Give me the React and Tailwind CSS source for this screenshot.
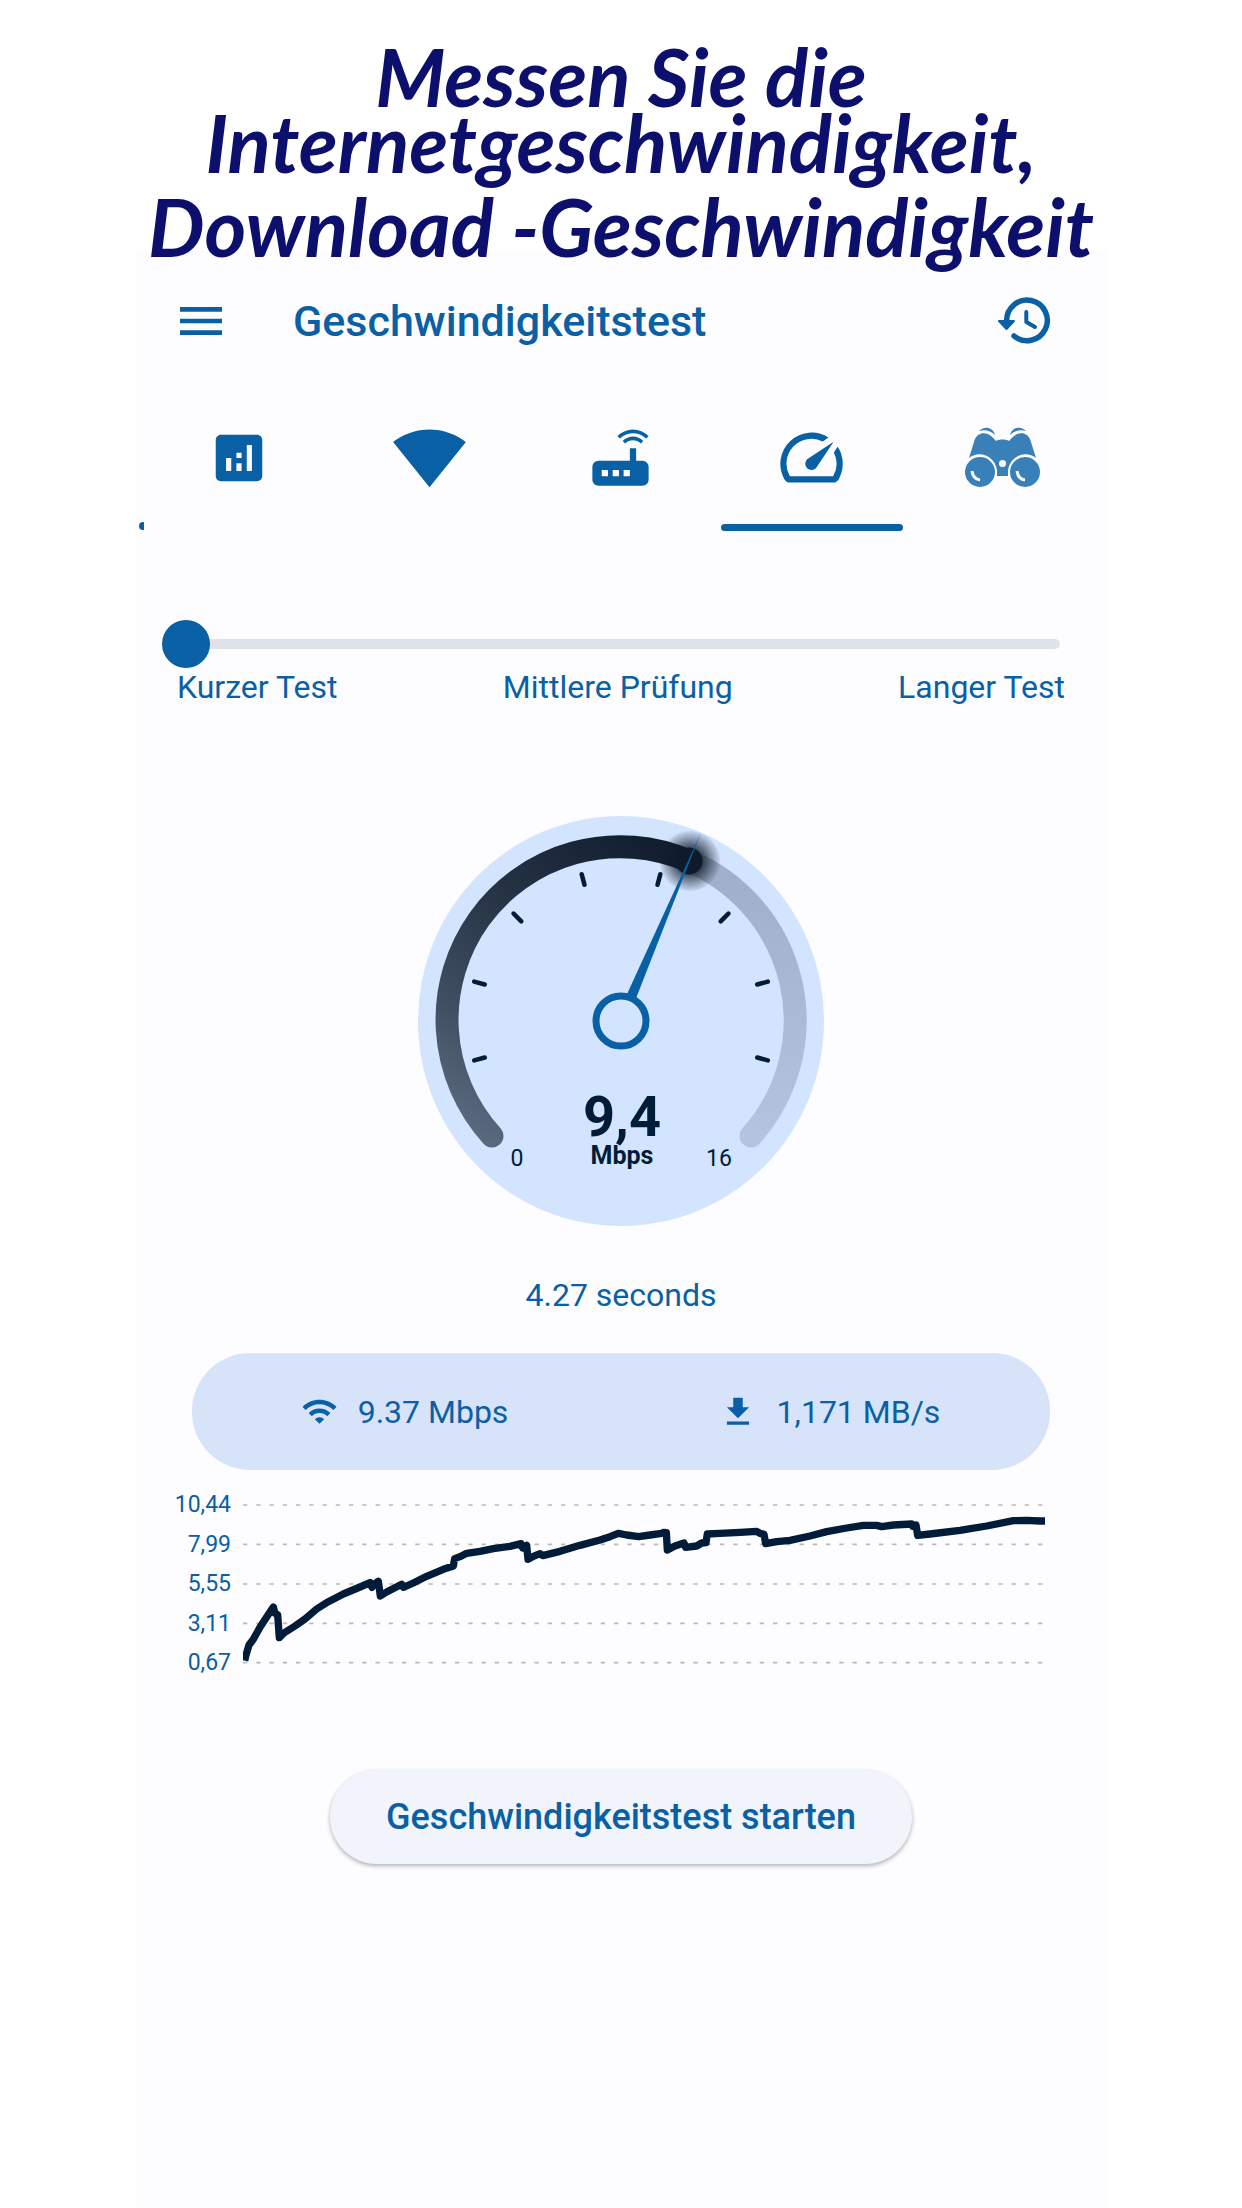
import { MdAnalytics, MdSignalWifi4Bar, MdRouter, MdSpeed, MdWifi, MdDownload, MdMenu } from "react-icons/md";

const TICKS = [-105, -75, -45, -15, 15, 45, 75, 105];

const LINE =
  "254,572 258,555 267,525 280,508 300,472 322,438 340,411 345,430 353,434 358,503 372,489 405,468 435,447 470,417 505,395 550,372 600,351 630,338 636,352 642,343 655,334 661,378 680,366 725,343 730,352 760,339 800,319 850,298 880,288 884,266 900,260 920,250 960,244 1000,236 1050,229 1083,221 1088,234 1100,226 1104,268 1120,259 1140,251 1148,257 1200,244 1260,226 1320,210 1350,200 1375,190 1400,195 1436,200 1470,195 1505,190 1510,187 1519,188 1522,240 1545,228 1572,219 1577,232 1610,228 1625,219 1638,218 1642,192 1680,190 1740,187 1790,184 1800,190 1812,193 1817,221 1850,215 1890,211 1950,198 2000,185 2060,174 2110,166 2150,166 2165,170 2200,165 2255,162 2258,169 2268,165 2273,196 2310,192 2400,181 2480,168 2560,152 2600,151 2640,153 2655,153";

function HistoryIcon() {
  return (
    <svg viewBox="0 0 54 50" className="h-[50px] w-[54px]" fill="none" stroke="currentColor" strokeLinecap="round" strokeLinejoin="round" aria-hidden="true">
      <path d="M8.7 25A20.3 20.3 0 1 1 16 40" strokeWidth="5.5" />
      <path d="M1 25H16L8.5 33Z" fill="currentColor" strokeWidth="2" />
      <path d="M28.3 16V26L37 31" strokeWidth="4" />
    </svg>
  );
}

function BinocularsIcon() {
  return (
    <svg viewBox="0 0 75 61" className="h-[61px] w-[75px]" fill="#3a80b8" aria-hidden="true">
      <path d="M14 4C18-1 28-1 30 8C26 4 20 2 14 4Z" />
      <path d="M61 4C57-1 47-1 45 8C49 4 55 2 61 4Z" />
      <path d="M4 31L9 15C11 7 17 5 23 7C27 9 29 12 31 14C34 12 41 12 44 14C46 12 48 9 52 7C58 5 64 7 66 15L71 31C65 26 56 26 50 31C46 34 44 38 43 43V49H32V43C31 38 29 34 25 31C19 26 10 26 4 31Z" />
      <circle cx="15" cy="45" r="15" />
      <circle cx="60" cy="45" r="15" />
      <circle cx="37.5" cy="36.500" r="3.500" fill="#fdfcff" />
      <path d="M7 44Q8 52 15 53M52 44Q53 52 60 53" fill="none" stroke="#fdfcff" strokeWidth="3" />
    </svg>
  );
}

function Gauge() {
  return (
    <svg viewBox="0 0 406 410" className="h-[410px] w-[406px]" role="img" aria-label="9,4 Mbps">
      <defs>
        <linearGradient id="done" gradientUnits="userSpaceOnUse" x1="60" y1="325" x2="272" y2="25">
          <stop offset="0" stopColor="#5b6b7f" />
          <stop offset="0.25" stopColor="#414f62" />
          <stop offset="0.57" stopColor="#263446" />
          <stop offset="1" stopColor="#0f1b2b" />
        </linearGradient>
        <linearGradient id="rest" x1="0" y1="0" x2="0" y2="1">
          <stop offset="0" stopColor="#9fafca" />
          <stop offset="1" stopColor="#b3c4df" />
        </linearGradient>
        <radialGradient id="glow">
          <stop offset="0.35" stopColor="#0f1b2b" stopOpacity="0.85" />
          <stop offset="1" stopColor="#0f1b2b" stopOpacity="0.06" />
        </radialGradient>
      </defs>
      <ellipse cx="203" cy="205" rx="203" ry="205" fill="#d3e4ff" />
      <g fill="none" strokeWidth="23" strokeLinecap="round">
        <path d="M271 45A173 173 0 0 1 333 320" stroke="url(#rest)" />
        <path d="M74 320A173 173 0 0 1 271 45" stroke="url(#done)" />
      </g>
      {TICKS.map((a) => (
        <path key={a} d="M203 53V64" transform={`rotate(${a} 203 205)`} stroke="#001c38" strokeWidth="4.5" strokeLinecap="round" />
      ))}
      <circle cx="272" cy="45" r="30" fill="url(#glow)" />
      <circle cx="271" cy="45" r="13.5" fill="#0f1b2b" />
      <path d="M203 1L208 180H198Z" transform="rotate(23 203 205)" fill="#0960a5" />
      <circle cx="203" cy="205" r="25" fill="#d3e4ff" stroke="#0960a5" strokeWidth="7" />
      <g fill="#001c38" textAnchor="middle">
        <text x="204" y="320" fontSize="56" fontWeight="700">9,4</text>
        <text x="204" y="348" fontSize="25" fontWeight="700">Mbps</text>
        <text x="99" y="350" fontSize="23">0</text>
        <text x="301" y="350" fontSize="23">16</text>
      </g>
    </svg>
  );
}

function Chart() {
  return (
    <div className="mt-[19px] flex pr-[62px] pl-8">
      <div className="flex w-16 flex-col justify-between text-right text-[23px] leading-8">
        {["10,44", "7,99", "5,55", "3,11", "0,67"].map((v) => (
          <span key={v}>{v}</span>
        ))}
      </div>
      <svg viewBox="249 57 2406 570" className="ml-3 min-w-0 flex-1" role="img" aria-label="Verlauf der Geschwindigkeit">
        {[105, 223, 342, 460, 578].map((y) => (
          <path key={y} d={`M249 ${y}H2655`} stroke="#b9b9b9" strokeWidth="5" strokeDasharray="13 26.75" />
        ))}
        <polyline points={LINE} fill="none" stroke="#001c38" strokeWidth="22" strokeLinejoin="round" />
      </svg>
    </div>
  );
}

const TABS = [
  { label: "Analyse", icon: <MdAnalytics size={62} /> },
  { label: "WLAN", icon: <MdSignalWifi4Bar size={75} /> },
  { label: "Router", icon: <MdRouter size={75} /> },
  { label: "Geschwindigkeit", icon: <MdSpeed size={75} />, active: true },
  { label: "Suche", icon: <BinocularsIcon /> },
];

export default function App() {
  return (
    <div className="min-h-screen bg-white font-['Roboto',sans-serif] text-[#0960a5]">
      <h1 className="relative z-10 pt-[43px] text-center font-['Lato',sans-serif] text-[80px] leading-[66px] font-bold text-[#0c106c] italic">
        Messen Sie die
        <br />
        Internetgeschwindigkeit,
        <span className="block leading-[102px]">Download -Geschwindigkeit</span>
      </h1>
      <main className="mx-auto -mt-[26px] flex min-h-[1957px] max-w-[972px] flex-col bg-[#fdfcff]">
        <header className="flex items-center px-[34px] pt-[38px]">
          <button aria-label="Menü" className="ml-1">
            <MdMenu size={56} />
          </button>
          <h2 className="ml-16 flex-1 text-[43px] leading-[64px] font-medium">Geschwindigkeitstest</h2>
          <button aria-label="Verlauf" className="mr-[21px]">
            <HistoryIcon />
          </button>
        </header>
        <nav className="relative mt-[67px] grid grid-cols-5 pr-[9px] pl-2">
          {TABS.map((t) => (
            <button key={t.label} aria-label={t.label} className="flex flex-col items-center">
              <span className="flex h-[75px] items-center">{t.icon}</span>
              <span className={t.active ? "mt-[29px] h-[7px] w-[182px] rounded-full bg-[#0960a5]" : "mt-[29px] h-[7px]"} />
            </button>
          ))}
          <span className="absolute bottom-px left-1 h-2 w-[5px] rounded-l-full bg-[#0960a5]" />
        </nav>
        <div className="mt-[89px] pr-[47px] pl-[27px]">
          <input
            type="range"
            min="0"
            max="2"
            defaultValue="0"
            aria-label="Testdauer"
            className="block h-12 w-full appearance-none bg-transparent [&::-webkit-slider-runnable-track]:h-[10px] [&::-webkit-slider-runnable-track]:rounded-full [&::-webkit-slider-runnable-track]:bg-[#dfe2eb] [&::-webkit-slider-thumb]:-mt-[19px] [&::-webkit-slider-thumb]:size-12 [&::-webkit-slider-thumb]:appearance-none [&::-webkit-slider-thumb]:rounded-full [&::-webkit-slider-thumb]:bg-[#0960a5]"
          />
        </div>
        <div className="-mt-px flex justify-between pr-[42px] pl-[42px] text-[32px] leading-10">
          <span>Kurzer Test</span>
          <span>Mittlere Prüfung</span>
          <span>Langer Test</span>
        </div>
        <div className="mt-[109px] flex justify-center">
          <Gauge />
        </div>
        <p className="mt-[49px] text-center text-[32px] leading-10">4.27 seconds</p>
        <section className="mx-[57px] mt-[38px] grid h-[117px] grid-cols-2 items-center rounded-[58px] bg-[#d7e3f8] pr-2 text-[32px]">
          <div className="flex items-center justify-center gap-5">
            <MdWifi size={37} />
            <span>9.37 Mbps</span>
          </div>
          <div className="flex items-center justify-center gap-5">
            <MdDownload size={38} />
            <span>1,171 MB/s</span>
          </div>
        </section>
        <Chart />
        <button className="mt-[91px] h-[94px] self-center rounded-full bg-[#f1f4fb] px-14 text-[36px] font-medium shadow-[0_2px_4px_rgba(0,0,0,0.3)]">
          Geschwindigkeitstest starten
        </button>
      </main>
    </div>
  );
}
